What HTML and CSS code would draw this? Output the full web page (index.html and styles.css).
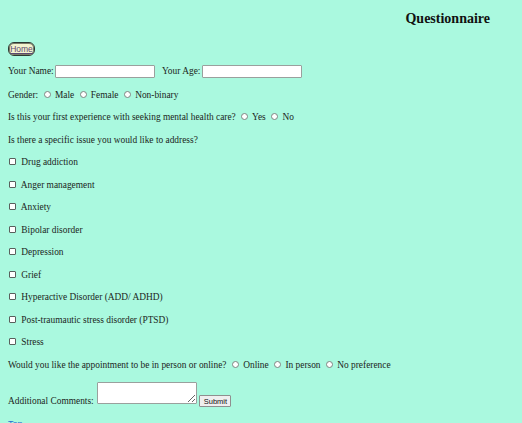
FILE: index.html
```html
<!DOCTYPE html>
<html lang="en">
<head>
<meta charset="utf-8">
<title>Questionnaire</title>
<link rel="stylesheet" href="styles.css">
</head>
<body>
<header class="top">
  <h1 class="title">Questionnaire</h1>
</header>
<nav class="nav">
  <button class="home-btn" type="button"><a class="home-link" href="#">Home</a></button>
</nav>
<form class="form">
  <p class="row">
    <label class="lbl">Your Name:</label><input class="text-in" type="text">
    <label class="lbl lbl-gap">Your Age:</label><input class="text-in text-in-age" type="text">
  </p>
  <p class="row">Gender:
    <input class="radio" type="radio" name="g"> Male
    <input class="radio" type="radio" name="g"> Female
    <input class="radio" type="radio" name="g"> Non-binary
  </p>
  <p class="row">Is this your first experience with seeking mental health care?
    <input class="radio" type="radio" name="f"> Yes
    <input class="radio" type="radio" name="f"> No
  </p>
  <p class="row">Is there a specific issue you would like to address?</p>
  <p class="row check-row"><input class="check" type="checkbox"> Drug addiction</p>
  <p class="row check-row"><input class="check" type="checkbox"> Anger management</p>
  <p class="row check-row"><input class="check" type="checkbox"> Anxiety</p>
  <p class="row check-row"><input class="check" type="checkbox"> Bipolar disorder</p>
  <p class="row check-row"><input class="check" type="checkbox"> Depression</p>
  <p class="row check-row"><input class="check" type="checkbox"> Grief</p>
  <p class="row check-row"><input class="check" type="checkbox"> Hyperactive Disorder (ADD/ ADHD)</p>
  <p class="row check-row"><input class="check" type="checkbox"> Post-traumautic stress disorder (PTSD)</p>
  <p class="row check-row"><input class="check" type="checkbox"> Stress</p>
  <p class="row">Would you like the appointment to be in person or online?
    <input class="radio" type="radio" name="a"> Online
    <input class="radio" type="radio" name="a"> In person
    <input class="radio" type="radio" name="a"> No preference
  </p>
  <p class="row comments">Additional Comments: <textarea class="area"></textarea> <button class="submit" type="submit">Submit</button></p>
</form>
<footer class="foot"><a class="foot-link" href="#">Top</a></footer>
</body>
</html>
```
FILE: styles.css
```css
html, body {
  margin: 0;
  padding: 0;
}
body {
  background: #aaf9df;
  color: #1c2622;
  font-family: "Liberation Serif", "Times New Roman", serif;
  font-size: 9.4px;
  padding: 0 8px;
}
.top {
  display: flex;
  justify-content: flex-end;
}
.title {
  font-size: 14px;
  font-weight: bold;
  margin: 11px 24px 0 0;
  line-height: 16px;
  color: #111;
}
.nav {
  margin-top: 15px;
}
.home-btn {
  background: #f3f4cf;
  border: 1px solid #2b3a33;
  border-radius: 6px;
  padding: 0;
  height: 14px;
  width: 27px;
  display: flex;
  align-items: center;
  justify-content: center;
  box-shadow: inset 0 0 0 1px #7a7a66;
}
.home-link {
  font-family: "Liberation Sans", Arial, sans-serif;
  font-size: 8.5px;
  line-height: 10px;
  color: #5b4870;
  text-decoration: underline;
}
.form {
  margin: 0;
}
.row {
  margin: 10.5px 0;
  line-height: 12px;
  white-space: nowrap;
}
.form .row:first-child {
  margin-top: 9px;
}
.lbl-gap {
  margin-left: 5px;
}
.text-in {
  width: 100px;
  height: 13px;
  box-sizing: border-box;
  border: 1px solid #9aa09d;
  border-radius: 1px;
  background: #fff;
  margin: 0 0 0 1px;
  padding: 0;
  vertical-align: middle;
}
.text-in-age {
  margin-left: 2px;
}
.radio {
  -webkit-appearance: none;
  appearance: none;
  box-sizing: border-box;
  width: 7px;
  height: 7px;
  border: 1px solid #7d8582;
  border-radius: 50%;
  background: #fff;
  margin: 0 2px 0 3px;
  vertical-align: 0;
}
.check {
  -webkit-appearance: none;
  appearance: none;
  box-sizing: border-box;
  width: 7px;
  height: 7px;
  border: 1px solid #59605d;
  border-radius: 1px;
  background: #fff;
  margin: 0 3px 0 1px;
  vertical-align: 0;
}
.comments {
  margin-top: 11px;
}
.area {
  width: 100px;
  height: 22px;
  box-sizing: border-box;
  border: 1px solid #9aa09d;
  border-radius: 1px;
  margin: 0 0 0 1px;
  padding: 0;
  vertical-align: baseline;
  resize: both;
}
.submit {
  font-family: "Liberation Sans", Arial, sans-serif;
  font-size: 7.5px;
  width: 32px;
  height: 12px;
  padding: 0;
  border: 1px solid #8f8f8f;
  background: #efefef;
  color: #111;
  vertical-align: baseline;
  border-radius: 1px;
}
.foot {
  margin-top: 12px;
}
.foot-link {
  font-family: "Liberation Sans", Arial, sans-serif;
  font-size: 9px;
  color: #2a6fd0;
}
```
